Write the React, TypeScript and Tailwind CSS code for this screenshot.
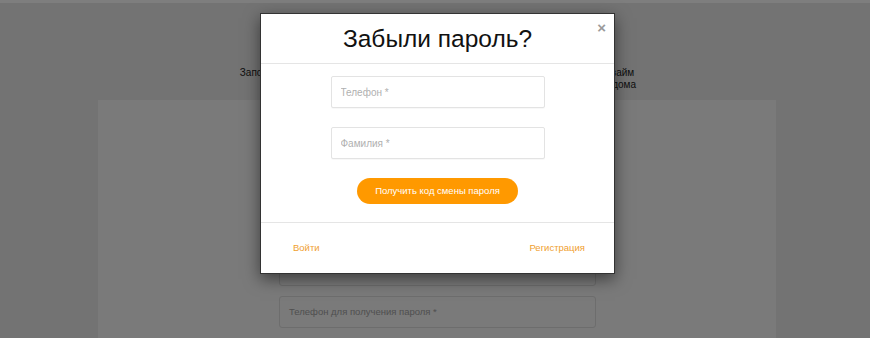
import React from 'react';

const font = { fontFamily: '"Liberation Sans", Arial, sans-serif' };

function PageField({ label }: { label: string }) {
  return (
    <div className="h-8 rounded-[3px] border border-[#dadada] bg-[#f4f4f4] px-[9px] flex items-center text-[9.5px] text-[#a0a0a0]">
      {label}
    </div>
  );
}

function ModalField({ label }: { label: string }) {
  return (
    <input
      placeholder={label}
      className="block h-8 w-[214px] rounded-[2px] border border-[#e3e3e3] bg-white px-[9px] text-[10px] text-[#333] placeholder:text-[#b0b0b0] outline-none shadow-[0_1px_1px_rgba(0,0,0,0.03)]"
    />
  );
}

export default function App() {
  return (
    <div className="relative h-[338px] w-[870px] overflow-hidden bg-[#e6e6e6]" style={font}>
      {/* page underneath */}
      <div className="h-[3px] bg-[#fcfcfc]" />
      <div className="pl-[4px] pt-[64px] text-center text-[10px] leading-[12px] text-[#222]">
        <p>Заполните анкету на сайте и получите персональное предложение на срочный займ</p>
        <p className="pl-[78px]">Оформление займа занимает не более 15 минут, не выходя из дома</p>
      </div>
      <div className="ml-[98px] mt-[9px] h-[300px] w-[678px] bg-[#f4f4f4] pt-[154px]">
        <div className="ml-[181px] flex w-[317px] flex-col gap-[10px]">
          <PageField label="" />
          <PageField label="Телефон для получения пароля *" />
          <PageField label="" />
        </div>
      </div>

      {/* overlay */}
      <div className="absolute inset-0 bg-black/50" />

      {/* modal */}
      <div className="absolute left-[260px] top-[13px] w-[355px] border border-[#333] bg-white shadow-[0_5px_15px_rgba(0,0,0,0.5)]">
        <div className="relative flex h-[50px] items-center justify-center border-b border-[#e5e5e5]">
          <h2 className="pt-[1px] text-[24.5px] leading-none text-[#111]">Забыли пароль?</h2>
          <span className="absolute right-[8px] top-[6px] text-[15px] font-bold leading-none text-[#9a9a9a]">×</span>
        </div>
        <div className="flex flex-col items-center gap-[19px] border-b border-[#e5e5e5] pt-[12px] pb-[18px]">
          <ModalField label="Телефон *" />
          <ModalField label="Фамилия *" />
          <button className="h-[26px] w-[161px] rounded-full bg-[#ff9900] text-[9.5px] text-white">
            Получить код смены пароля
          </button>
        </div>
        <div className="flex h-[50px] items-center justify-between pl-[32px] pr-[29px] text-[9.5px] text-[#f0a030]">
          <a>Войти</a>
          <a>Регистрация</a>
        </div>
      </div>
    </div>
  );
}
